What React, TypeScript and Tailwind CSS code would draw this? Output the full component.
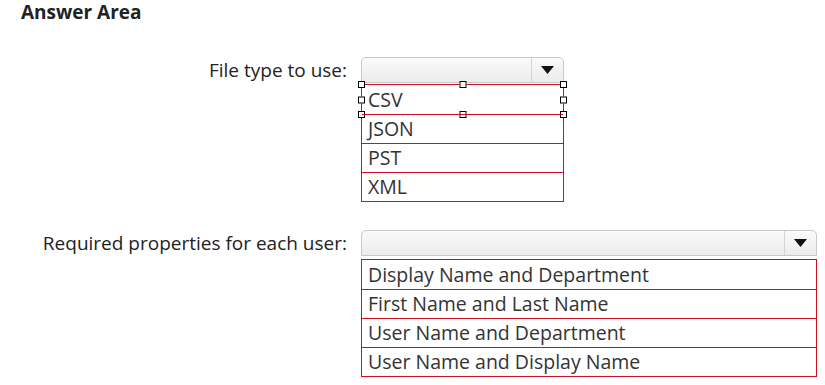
import React from "react";

const fileTypes = ["CSV", "JSON", "PST", "XML"];
const properties = [
  "Display Name and Department",
  "First Name and Last Name",
  "User Name and Department",
  "User Name and Display Name",
];

// selection grip drawn over the selected option's edges
function Handle({ className }: { className: string }) {
  return <span className={`absolute h-[7px] w-[7px] border border-black bg-white ${className}`} />;
}

function Dropdown({ width }: { width: string }) {
  return (
    <div
      className={`flex h-[26px] ${width} rounded-t-[5px] border border-[#c9c9c9] bg-gradient-to-b from-[#fafafa] to-[#ececec]`}
    >
      <div className="flex-1" />
      <div className="flex w-[32px] items-center justify-center border-l border-[#d4d4d4]">
        <svg width="13" height="8" viewBox="0 0 13 8">
          <path d="M0 0 H13 L6.5 8 Z" fill="#111" />
        </svg>
      </div>
    </div>
  );
}

function OptionList({ items, width, selected }: { items: string[]; width: string; selected?: number }) {
  return (
    <div className={`${width} border border-[#cc1026]`}>
      {items.map((item, i) => (
        <div
          key={item}
          className={`relative flex h-[29px] items-center pl-[6px] text-[19.5px] text-[#333] ${
            i > 0 ? "border-t border-[#cc1026]" : ""
          }`}
        >
          {item}
          {selected === i && (
            <>
              <Handle className="-left-[4px] -top-[4px]" />
              <Handle className="left-1/2 -top-[4px] -translate-x-1/2" />
              <Handle className="-right-[4px] -top-[4px]" />
              <Handle className="-left-[4px] top-1/2 -translate-y-1/2" />
              <Handle className="-right-[4px] top-1/2 -translate-y-1/2" />
              <Handle className="-bottom-[4px] -left-[4px]" />
              <Handle className="-bottom-[4px] left-1/2 -translate-x-1/2" />
              <Handle className="-bottom-[4px] -right-[4px]" />
            </>
          )}
        </div>
      ))}
    </div>
  );
}

export default function App() {
  return (
    <div
      className="h-[385px] w-[825px] overflow-hidden bg-white text-[#222]"
      style={{ fontFamily: '"Open Sans", "Noto Sans", sans-serif' }}
    >
      <h1 className="pl-[21px] text-[19px] font-bold leading-[24px] text-[#222]">Answer Area</h1>

      <div className="mt-[33px] grid grid-cols-[347px_1fr] gap-x-[14px] gap-y-[28px]">
        <div className="flex h-[26px] items-center justify-end text-[19px]">File type to use:</div>
        <div className="flex flex-col gap-[1px]">
          <Dropdown width="w-[203px]" />
          <OptionList items={fileTypes} width="w-[203px]" selected={0} />
        </div>

        <div className="flex h-[26px] items-center justify-end text-[19px]">
          Required properties for each user:
        </div>
        <div className="flex flex-col gap-[3px]">
          <Dropdown width="w-[456px]" />
          <OptionList items={properties} width="w-[456px]" />
        </div>
      </div>
    </div>
  );
}
